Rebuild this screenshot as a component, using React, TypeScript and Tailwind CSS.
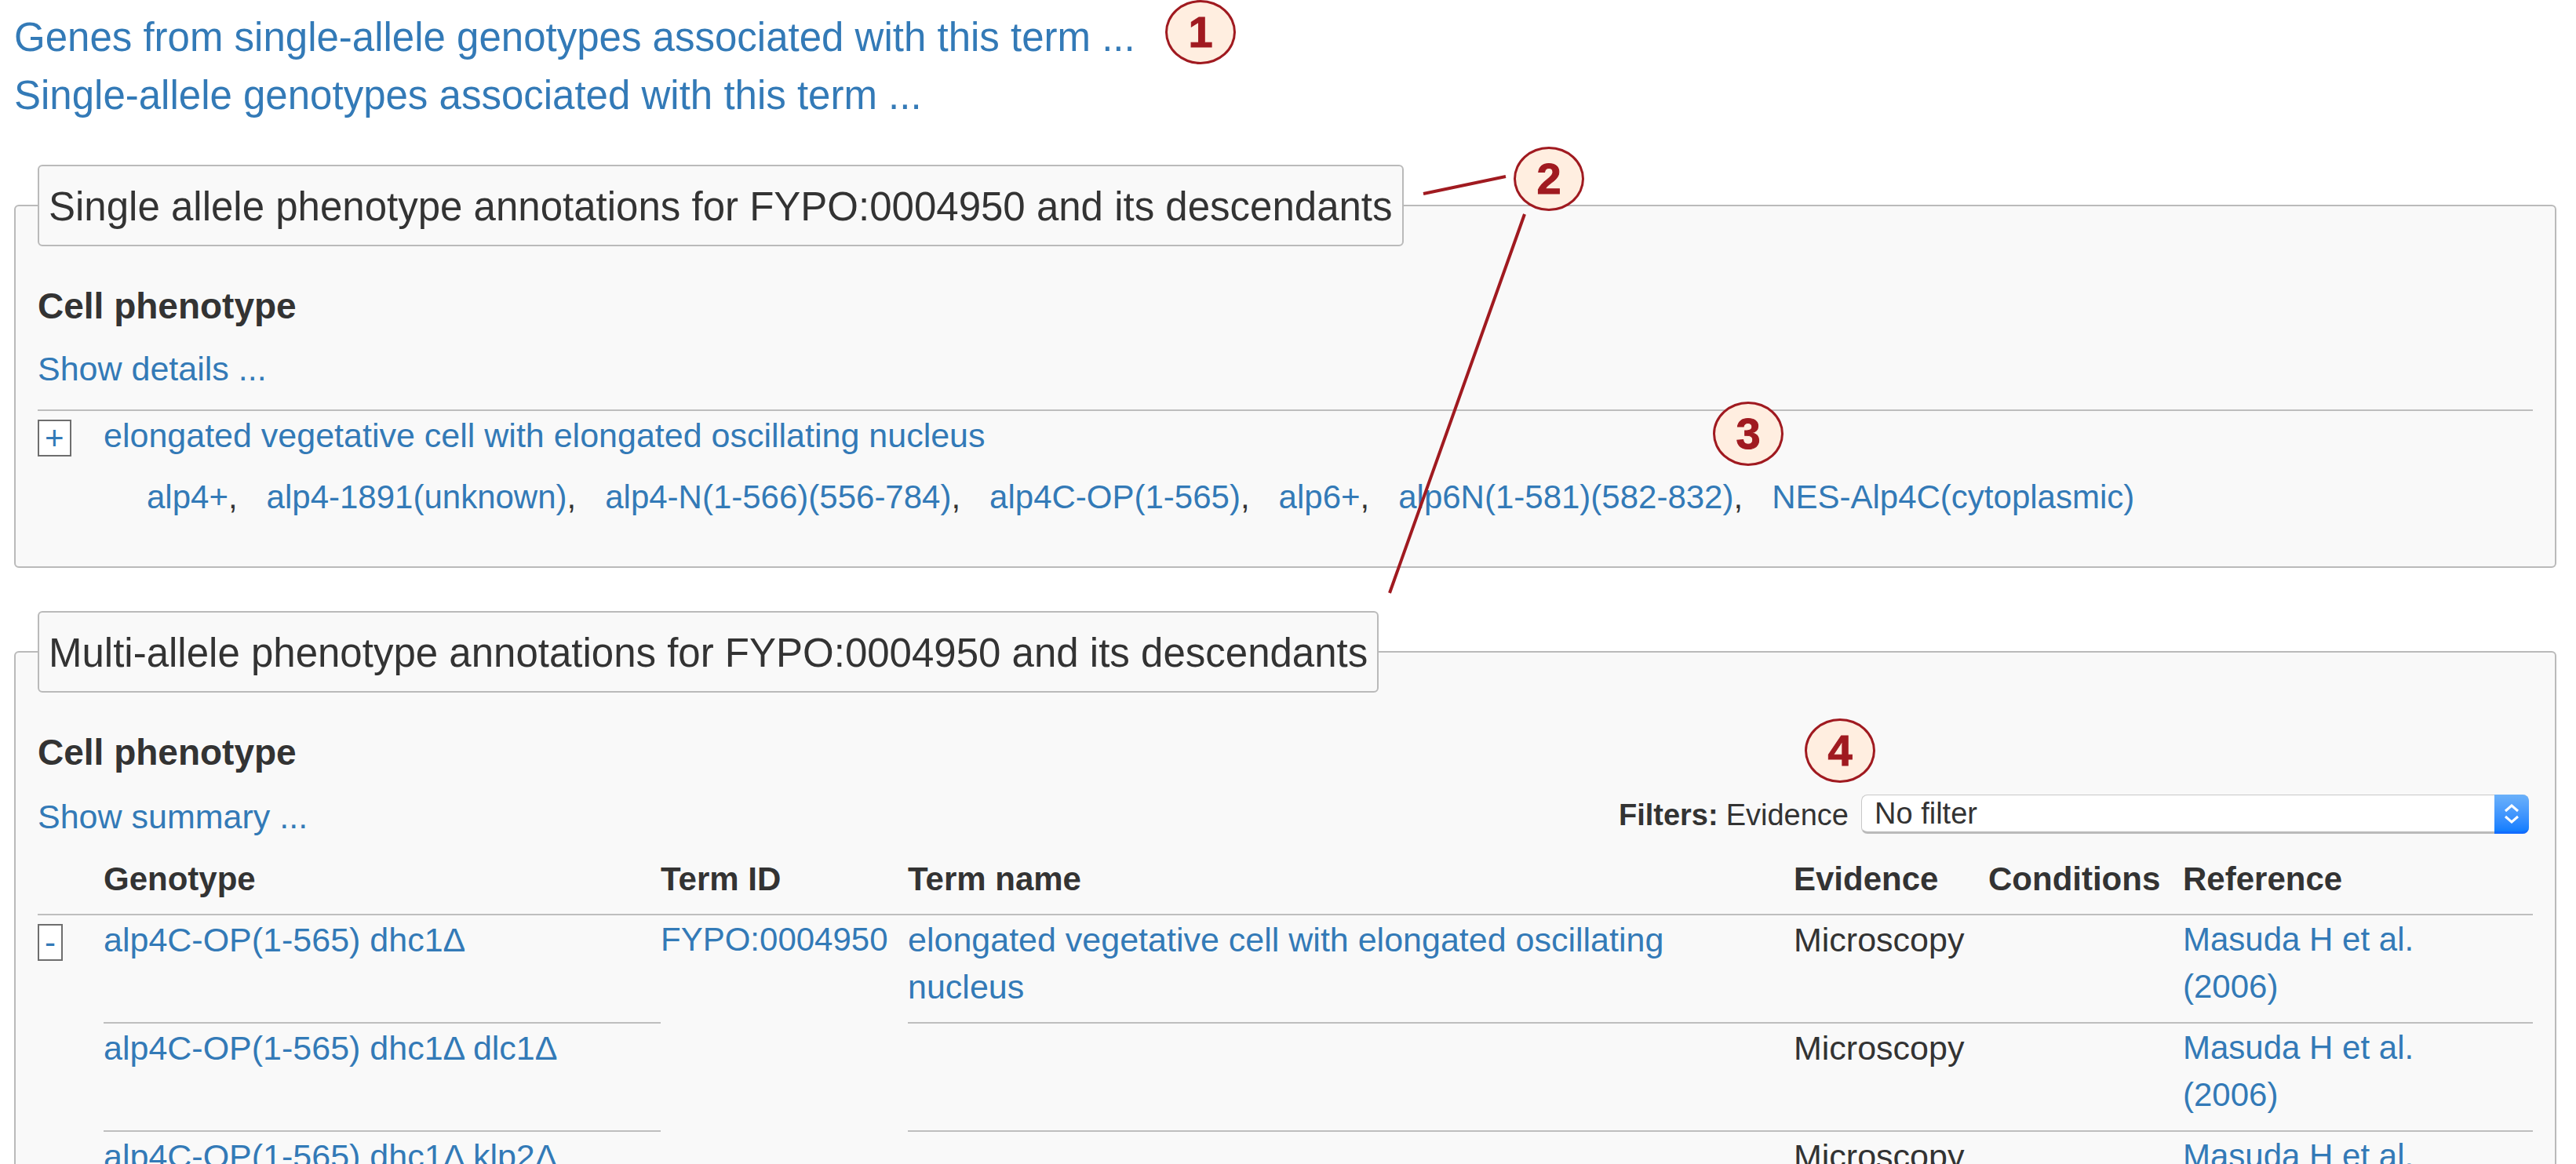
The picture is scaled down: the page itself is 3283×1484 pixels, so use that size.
import type { ReactNode } from "react";

const linkClass = "text-[#337ab7] hover:underline";

function Link({ children }: { children: ReactNode }) {
  return (
    <a href="#" className={linkClass}>
      {children}
    </a>
  );
}

function Toggle({ sign, label }: { sign: string; label: string }) {
  return (
    <button
      type="button"
      aria-label={label}
      className="mt-[11px] flex h-[47px] items-center border-2 border-[#6e6e6e] bg-white px-[7px] text-[42px] leading-none text-[#337ab7]"
    >
      {sign}
    </button>
  );
}

function Section({ title, className, children }: { title: string; className: string; children: ReactNode }) {
  return (
    <fieldset className={`min-w-0 rounded-md border-2 border-[#bababa] bg-[#f9f9f9] px-7 ${className}`}>
      <legend className="rounded-md border-2 border-[#bababa] bg-[#f9f9f9] px-3 pt-4 pb-3 text-[51px] leading-[72px]">
        {title}
      </legend>
      <h3 className="mt-[46px] text-[46px] leading-[60px] font-bold">Cell phenotype</h3>
      {children}
    </fieldset>
  );
}

function Marker({ n, className }: { n: number; className: string }) {
  return (
    <div
      className={`absolute flex h-[82px] w-[90px] items-center justify-center rounded-[50%] border-[3px] border-[#a01a20] bg-[#ffeee0] text-[56px] leading-none font-bold text-[#a01a20] [-webkit-text-stroke:1px_#a01a20] ${className}`}
    >
      {n}
    </div>
  );
}

const alleles = [
  "alp4+",
  "alp4-1891(unknown)",
  "alp4-N(1-566)(556-784)",
  "alp4C-OP(1-565)",
  "alp6+",
  "alp6N(1-581)(582-832)",
  "NES-Alp4C(cytoplasmic)",
];

const genotypes = ["alp4C-OP(1-565) dhc1Δ", "alp4C-OP(1-565) dhc1Δ dlc1Δ", "alp4C-OP(1-565) dhc1Δ klp2Δ"];

export default function App() {
  return (
    <main className="relative h-screen overflow-hidden bg-white pt-[11px] pr-[25px] pl-[18px] font-['Liberation_Sans',Arial,sans-serif] text-[43px] leading-[60px] text-[#333]">
      <nav className="flex flex-col items-start text-[51px] leading-[74px]">
        <Link>Genes from single-allele genotypes associated with this term ...</Link>
        <Link>Single-allele genotypes associated with this term ...</Link>
      </nav>

      <Section title="Single allele phenotype annotations for FYPO:0004950 and its descendants" className="mt-[51px] pb-[58px]">
        <div className="mt-5">
          <Link>Show details ...</Link>
        </div>
        <div className="mt-[22px] flex border-t-2 border-[#bebebe]">
          <div className="w-[84px] shrink-0">
            <Toggle sign="+" label="Expand term" />
          </div>
          <div className="pt-px">
            <Link>elongated vegetative cell with elongated oscillating nucleus</Link>
            <ul className="mt-[19px] flex flex-wrap gap-x-[37px] pl-[55px] text-[42px]">
              {alleles.map((a, i) => (
                <li key={a}>
                  <Link>{a}</Link>
                  {i < alleles.length - 1 && ","}
                </li>
              ))}
            </ul>
          </div>
        </div>
      </Section>

      <Section title="Multi-allele phenotype annotations for FYPO:0004950 and its descendants" className="mt-[55px] pb-[58px]">
        <div className="mt-[22px] flex items-start justify-between">
          <Link>Show summary ...</Link>
          <div className="mt-0.5 mr-[5px] flex items-center text-[38px] leading-[52px]">
            <strong className="mr-[10px]">Filters:</strong>
            <label htmlFor="evidence" className="mr-4">
              Evidence
            </label>
            <div className="relative h-[52px]">
              <select
                id="evidence"
                className="block h-[50px] w-[851px] appearance-none rounded-lg border border-b-[3px] border-[#c8c8c8] border-b-[#bababa] bg-white pr-14 pl-4 text-[38px] leading-[44px]"
              >
                <option>No filter</option>
              </select>
              <span className="pointer-events-none absolute top-0 right-0 flex h-[50px] w-[44px] items-center justify-center rounded-r-lg border-b-[3px] border-[#126cff] bg-linear-to-b from-[#6bb1fa] to-[#0f7dff]">
                <svg width="20" height="28" viewBox="0 0 20 28" fill="none" stroke="white" strokeWidth="3" aria-hidden="true">
                  <path d="M2 11 10 4l8 7M2 18l8 7 8-7" />
                </svg>
              </span>
            </div>
          </div>
        </div>

        <table className="mt-5 w-full table-fixed border-collapse text-left align-top">
          <colgroup>
            <col className="w-[84px]" />
            <col className="w-[710px]" />
            <col className="w-[315px]" />
            <col />
            <col className="w-[248px]" />
            <col className="w-[248px]" />
            <col className="w-[446px]" />
          </colgroup>
          <thead>
            <tr className="border-b-2 border-[#bebebe] text-[42px]">
              <td />
              {["Genotype", "Term ID", "Term name", "Evidence", "Conditions", "Reference"].map((h) => (
                <th key={h} scope="col" className="pb-[14px] font-bold">
                  {h}
                </th>
              ))}
            </tr>
          </thead>
          <tbody>
            {genotypes.map((g, i) => (
              <tr key={g} className="align-top">
                {i === 0 && (
                  <td rowSpan={3}>
                    <Toggle sign="-" label="Collapse term" />
                  </td>
                )}
                <td className="border-b-2 border-[#bebebe] pt-px pb-[15px]">
                  <Link>{g}</Link>
                </td>
                {i === 0 && (
                  <td rowSpan={3} className="pt-px text-[42px]">
                    <Link>FYPO:0004950</Link>
                  </td>
                )}
                <td className="border-b-2 border-[#bebebe] pt-px pr-12 pb-[15px]">
                  {i === 0 && <Link>elongated vegetative cell with elongated oscillating nucleus</Link>}
                </td>
                <td className="border-b-2 border-[#bebebe] pt-px pb-[15px]">Microscopy</td>
                <td className="border-b-2 border-[#bebebe] pt-px pb-[15px]" />
                <td className="border-b-2 border-[#bebebe] pt-px pr-[120px] pb-[15px] text-[42px]">
                  <Link>Masuda H et al. (2006)</Link>
                </td>
              </tr>
            ))}
          </tbody>
        </table>
      </Section>

      <svg className="pointer-events-none absolute top-0 left-0 overflow-visible" width="1" height="1" stroke="#a01a20" strokeWidth="4" aria-hidden="true">
        <path d="M1814 247 1919 225M1943 273 1771 756" />
      </svg>
      <Marker n={1} className="top-0 left-[1485px]" />
      <Marker n={2} className="top-[187px] left-[1929px]" />
      <Marker n={3} className="top-[512px] left-[2183px]" />
      <Marker n={4} className="top-[916px] left-[2300px]" />
    </main>
  );
}
